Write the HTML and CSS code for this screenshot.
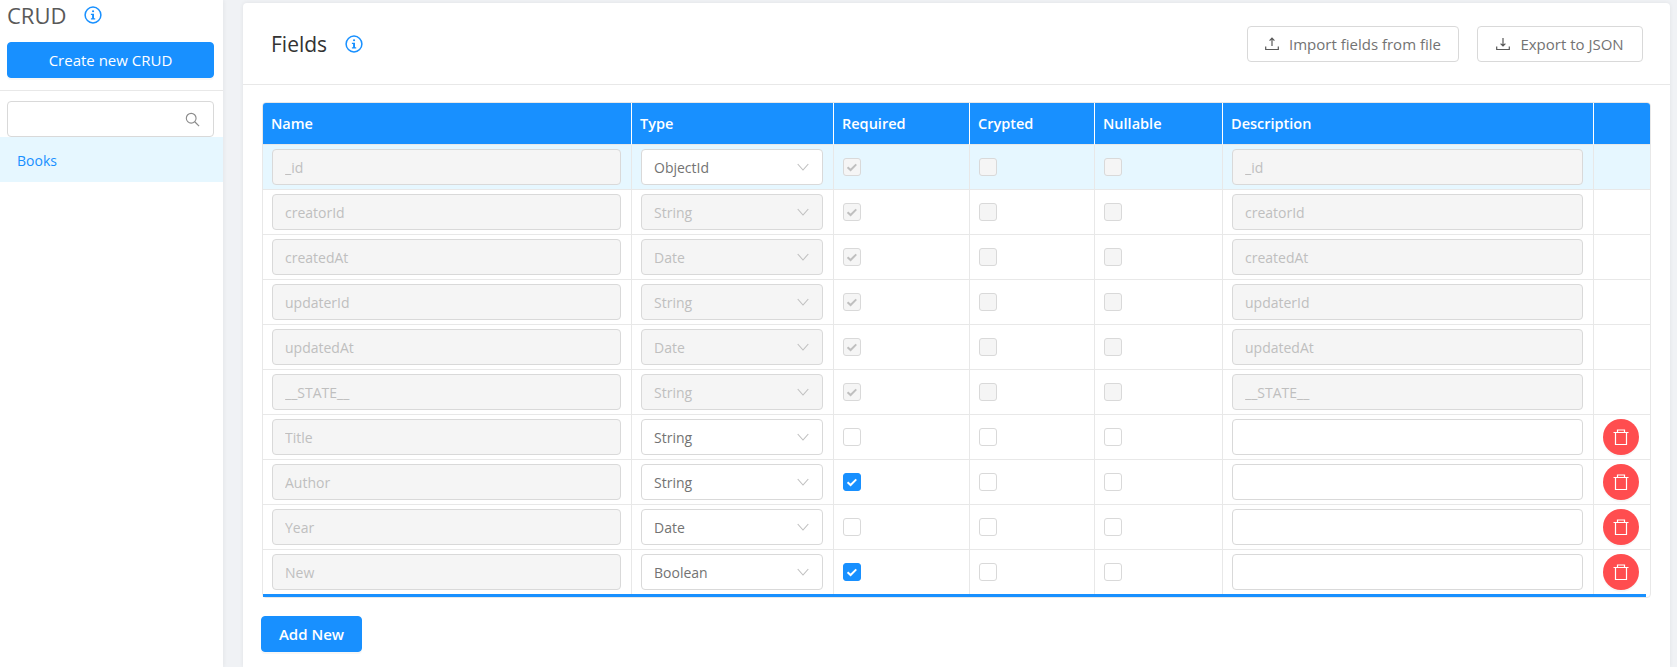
FILE: index.html
```html
<!DOCTYPE html>
<html lang="en">
<head>
    <meta charset="UTF-8">
    <meta name="viewport" content="width=device-width, initial-scale=1.0">
    <title>CRUD</title>
    <link rel="stylesheet" href="styles.css">
</head>
<body>

<svg class="defs" width="0" height="0" aria-hidden="true">
    <symbol id="info" viewBox="0 0 18 18">
        <circle cx="9" cy="9" r="7.9" fill="none" stroke="currentColor" stroke-width="1.5"/>
        <rect x="8" y="4.2" width="2.1" height="2.1" rx="1" fill="currentColor"/>
        <path d="M6.9 7.7h3.1v4.6h1.2v1.2H6.9v-1.2h1.2V8.9H6.9z" fill="currentColor"/>
    </symbol>
    <symbol id="chevron" viewBox="0 0 12 8">
        <path d="M.7 1L6 7l5.3-6" fill="none" stroke="currentColor" stroke-width="1.1"/>
    </symbol>
    <symbol id="trash" viewBox="0 0 18 18">
        <path d="M1.5 4.5h15M3.5 4.5v12h11v-12M5.5 4.5V2h7v2.5" fill="none" stroke="currentColor" stroke-width="1.2"/>
    </symbol>
    <symbol id="tick" viewBox="0 0 18 18">
        <path d="M4 9.2l3.4 3.2L13.8 6" fill="none" stroke="currentColor" stroke-width="2.2"/>
    </symbol>
</svg>

<div class="layout">
    <aside class="sidebar">
        <div class="sidebar-head">
            <div class="sidebar-title">
                <span>CRUD</span>
                <svg class="info-icon"><use href="#info"/></svg>
            </div>
            <button class="btn btn-primary btn-wide">Create new CRUD</button>
        </div>
        <div class="search-wrap">
            <div class="search">
                <input type="text">
                <svg class="search-icon" viewBox="0 0 16 16">
                    <circle cx="6.6" cy="6.6" r="5.2" fill="none" stroke="currentColor" stroke-width="1.2"/>
                    <path d="M10.4 10.4l4.6 4.6" stroke="currentColor" stroke-width="1.3"/>
                </svg>
            </div>
        </div>
        <div class="menu-item">Books</div>
    </aside>

    <main class="main">
        <section class="card">
            <header class="card-head">
                <div class="card-title">
                    <span>Fields</span>
                    <svg class="info-icon"><use href="#info"/></svg>
                </div>
                <div class="card-actions">
                    <button class="btn btn-default btn-import">
                        <svg class="btn-icon" viewBox="0 0 14 14">
                            <path d="M7 9V1.5M4.6 3.6L7 1.2l2.4 2.4M.7 9.5v3h12.6v-3" fill="none" stroke="currentColor" stroke-width="1.2"/>
                        </svg>
                        Import fields from file
                    </button>
                    <button class="btn btn-default btn-export">
                        <svg class="btn-icon" viewBox="0 0 14 14">
                            <path d="M7 1v7.8M4.6 6.6L7 9l2.4-2.4M.7 9.5v3h12.6v-3" fill="none" stroke="currentColor" stroke-width="1.2"/>
                        </svg>
                        Export to JSON
                    </button>
                </div>
            </header>

            <div class="card-body">
                <div class="table-wrap">
                    <table class="fields">
                        <colgroup>
                            <col class="col-name">
                            <col class="col-type">
                            <col class="col-required">
                            <col class="col-crypted">
                            <col class="col-nullable">
                            <col class="col-desc">
                            <col class="col-action">
                        </colgroup>
                        <thead>
                            <tr>
                                <th>Name</th>
                                <th>Type</th>
                                <th>Required</th>
                                <th>Crypted</th>
                                <th>Nullable</th>
                                <th>Description</th>
                                <th></th>
                            </tr>
                        </thead>
                        <tbody>
                            <tr class="active">
                                <td><input class="field" type="text" value="_id" disabled></td>
                                <td><div class="select">ObjectId<svg class="chevron"><use href="#chevron"/></svg></div></td>
                                <td><span class="check off ticked"><svg><use href="#tick"/></svg></span></td>
                                <td><span class="check off"></span></td>
                                <td><span class="check off"></span></td>
                                <td><input class="field" type="text" value="_id" disabled></td>
                                <td></td>
                            </tr>
                            <tr>
                                <td><input class="field" type="text" value="creatorId" disabled></td>
                                <td><div class="select off">String<svg class="chevron"><use href="#chevron"/></svg></div></td>
                                <td><span class="check off ticked"><svg><use href="#tick"/></svg></span></td>
                                <td><span class="check off"></span></td>
                                <td><span class="check off"></span></td>
                                <td><input class="field" type="text" value="creatorId" disabled></td>
                                <td></td>
                            </tr>
                            <tr>
                                <td><input class="field" type="text" value="createdAt" disabled></td>
                                <td><div class="select off">Date<svg class="chevron"><use href="#chevron"/></svg></div></td>
                                <td><span class="check off ticked"><svg><use href="#tick"/></svg></span></td>
                                <td><span class="check off"></span></td>
                                <td><span class="check off"></span></td>
                                <td><input class="field" type="text" value="createdAt" disabled></td>
                                <td></td>
                            </tr>
                            <tr>
                                <td><input class="field" type="text" value="updaterId" disabled></td>
                                <td><div class="select off">String<svg class="chevron"><use href="#chevron"/></svg></div></td>
                                <td><span class="check off ticked"><svg><use href="#tick"/></svg></span></td>
                                <td><span class="check off"></span></td>
                                <td><span class="check off"></span></td>
                                <td><input class="field" type="text" value="updaterId" disabled></td>
                                <td></td>
                            </tr>
                            <tr>
                                <td><input class="field" type="text" value="updatedAt" disabled></td>
                                <td><div class="select off">Date<svg class="chevron"><use href="#chevron"/></svg></div></td>
                                <td><span class="check off ticked"><svg><use href="#tick"/></svg></span></td>
                                <td><span class="check off"></span></td>
                                <td><span class="check off"></span></td>
                                <td><input class="field" type="text" value="updatedAt" disabled></td>
                                <td></td>
                            </tr>
                            <tr>
                                <td><input class="field" type="text" value="__STATE__" disabled></td>
                                <td><div class="select off">String<svg class="chevron"><use href="#chevron"/></svg></div></td>
                                <td><span class="check off ticked"><svg><use href="#tick"/></svg></span></td>
                                <td><span class="check off"></span></td>
                                <td><span class="check off"></span></td>
                                <td><input class="field" type="text" value="__STATE__" disabled></td>
                                <td></td>
                            </tr>
                            <tr>
                                <td><input class="field" type="text" value="Title" disabled></td>
                                <td><div class="select">String<svg class="chevron"><use href="#chevron"/></svg></div></td>
                                <td><span class="check"></span></td>
                                <td><span class="check"></span></td>
                                <td><span class="check"></span></td>
                                <td><input class="field" type="text"></td>
                                <td><button class="btn-delete"><svg><use href="#trash"/></svg></button></td>
                            </tr>
                            <tr>
                                <td><input class="field" type="text" value="Author" disabled></td>
                                <td><div class="select">String<svg class="chevron"><use href="#chevron"/></svg></div></td>
                                <td><span class="check on"><svg><use href="#tick"/></svg></span></td>
                                <td><span class="check"></span></td>
                                <td><span class="check"></span></td>
                                <td><input class="field" type="text"></td>
                                <td><button class="btn-delete"><svg><use href="#trash"/></svg></button></td>
                            </tr>
                            <tr>
                                <td><input class="field" type="text" value="Year" disabled></td>
                                <td><div class="select">Date<svg class="chevron"><use href="#chevron"/></svg></div></td>
                                <td><span class="check"></span></td>
                                <td><span class="check"></span></td>
                                <td><span class="check"></span></td>
                                <td><input class="field" type="text"></td>
                                <td><button class="btn-delete"><svg><use href="#trash"/></svg></button></td>
                            </tr>
                            <tr>
                                <td><input class="field" type="text" value="New" disabled></td>
                                <td><div class="select">Boolean<svg class="chevron"><use href="#chevron"/></svg></div></td>
                                <td><span class="check on"><svg><use href="#tick"/></svg></span></td>
                                <td><span class="check"></span></td>
                                <td><span class="check"></span></td>
                                <td><input class="field" type="text"></td>
                                <td><button class="btn-delete"><svg><use href="#trash"/></svg></button></td>
                            </tr>
                        </tbody>
                    </table>
                    <div class="table-foot"></div>
                </div>
                <button class="btn btn-primary btn-add">Add New</button>
            </div>
        </section>
    </main>
</div>

</body>
</html>
```

FILE: styles.css
```css
* {
    box-sizing: border-box;
}

html, body {
    height: 667px;
    margin: 0;
    overflow: hidden;
}

body {
    background-color: #f0f2f5;
    color: #595959;
    font-family: "Open Sans", "Noto Sans", sans-serif;
    font-size: 14px;
}

.defs {
    display: block;
    position: absolute;
}

.layout {
    display: flex;
    height: 667px;
}

/* Sidebar */
.sidebar {
    width: 223px;
    flex-shrink: 0;
    background-color: white;
    box-shadow: 1px 0 4px rgba(0, 0, 0, 0.05);
}

.sidebar-head {
    height: 91px;
    padding: 0 9px 0 7px;
    border-bottom: 1px solid #e8e8e8;
}

.sidebar-title {
    display: flex;
    align-items: center;
    gap: 18px;
    height: 30px;
    margin-bottom: 12px;
    font-size: 22px;
}

.info-icon {
    width: 18px;
    height: 18px;
    color: #1890ff;
}

.search-wrap {
    padding: 10px 9px 0 7px;
}

.search {
    display: flex;
    align-items: center;
    height: 36px;
    padding-right: 13px;
    background-color: white;
    border: 1px solid #d9d9d9;
    border-radius: 4px;
}

.search input {
    flex: 1;
    width: 100%;
    height: 100%;
    border: 0;
    outline: 0;
    background: transparent;
}

.search-icon {
    width: 15px;
    height: 15px;
    color: #8c8c8c;
}

.menu-item {
    height: 45px;
    padding-left: 17px;
    line-height: 47px;
    background-color: #e6f7ff;
    color: #1890ff;
}

/* Buttons */
.btn {
    display: inline-flex;
    align-items: center;
    justify-content: center;
    height: 36px;
    border-radius: 4px;
    font-family: inherit;
    font-size: 15px;
    cursor: pointer;
}

.btn-primary {
    background-color: #1890ff;
    color: white;
    border: 1px solid #1890ff;
    box-shadow: 0 2px 0 rgba(0, 0, 0, 0.03);
}

.btn-wide {
    width: 207px;
}

.btn-default {
    gap: 10px;
    padding: 0;
    background-color: white;
    color: #737373;
    border: 1px solid #d9d9d9;
}

.btn-import {
    width: 212px;
}

.btn-export {
    width: 166px;
}

.btn-icon {
    width: 14px;
    height: 14px;
    color: #595959;
}

.btn-add {
    width: 101px;
    margin-top: 18px;
    font-weight: 600;
}

/* Main card */
.main {
    flex: 1;
    padding: 3px 7px 0 20px;
    min-width: 0;
}

.card {
    height: 664px;
    background-color: white;
    border-radius: 4px 4px 0 0;
    box-shadow: 0 0 4px rgba(0, 0, 0, 0.07);
}

.card-head {
    display: flex;
    align-items: center;
    justify-content: space-between;
    height: 82px;
    padding: 0 27px 0 28px;
    border-bottom: 1px solid #e8e8e8;
}

.card-title {
    display: flex;
    align-items: center;
    gap: 18px;
    color: #333;
    font-size: 21px;
}

.card-actions {
    display: flex;
    gap: 18px;
}

.card-body {
    padding: 17px 18px 0;
}

/* Fields table */
.table-wrap {
    width: 1389px;
    margin-left: 1px;
    border: 1px solid #e8e8e8;
    border-radius: 4px;
}

.fields {
    width: 1387px;
    table-layout: fixed;
    border-collapse: separate;
    border-spacing: 0;
}

.col-name { width: 368px; }
.col-type { width: 202px; }
.col-required { width: 136px; }
.col-crypted { width: 125px; }
.col-nullable { width: 128px; }
.col-desc { width: 371px; }
.col-action { width: 57px; }

.fields th {
    height: 42px;
    padding: 0 8px;
    background-color: #1890ff;
    color: white;
    font-weight: 600;
    font-size: 14.5px;
    text-align: left;
    border-left: 1px solid white;
    border-bottom: 1px solid #e8e8e8;
}

.fields th:first-child {
    border-left: 0;
    border-top-left-radius: 3px;
}

.fields th:last-child {
    border-top-right-radius: 3px;
}

.fields td {
    height: 45px;
    padding: 4px 9px;
    border-left: 1px solid #e8e8e8;
    border-bottom: 1px solid #e8e8e8;
}

.fields td:first-child {
    border-left: 0;
}

.fields tr:last-child td {
    height: 44px;
    border-bottom: 0;
}

.fields td:first-child,
.fields td:nth-child(2),
.fields td:nth-child(6) {
    padding-right: 10px;
}

.active td {
    background-color: #e6f7ff;
}

.field {
    display: block;
    width: 100%;
    height: 36px;
    padding: 1px 12px 0;
    background-color: white;
    border: 1px solid #d9d9d9;
    border-radius: 4px;
    outline: 0;
    font-family: inherit;
    font-size: 14px;
    color: #595959;
}

.field:disabled {
    background-color: #f5f5f5;
    color: #bfbfbf;
}

.select {
    display: flex;
    align-items: center;
    justify-content: space-between;
    height: 36px;
    padding: 0 13px 0 12px;
    background-color: white;
    border: 1px solid #d9d9d9;
    border-radius: 4px;
    color: #737373;
}

.select.off {
    background-color: #f5f5f5;
    color: #bfbfbf;
}

.chevron {
    width: 12px;
    height: 8px;
    color: #bfbfbf;
}

.check {
    display: block;
    width: 18px;
    height: 18px;
    background-color: white;
    border: 1px solid #d9d9d9;
    border-radius: 3px;
}

.check svg {
    display: block;
    width: 16px;
    height: 16px;
}

.check.off {
    background-color: #f5f5f5;
}

.check.ticked {
    color: #bfbfbf;
}

.check.on {
    background-color: #1890ff;
    border-color: #1890ff;
    color: white;
}

.btn-delete {
    display: flex;
    align-items: center;
    justify-content: center;
    width: 36px;
    height: 36px;
    padding: 0;
    background-color: #ff4d4f;
    color: white;
    border: 0;
    border-radius: 50%;
    box-shadow: 0 2px 0 rgba(0, 0, 0, 0.03);
    cursor: pointer;
}

.btn-delete svg {
    width: 18px;
    height: 18px;
}

.table-foot {
    width: 1383px;
    height: 3px;
    background-color: #1890ff;
}
```
